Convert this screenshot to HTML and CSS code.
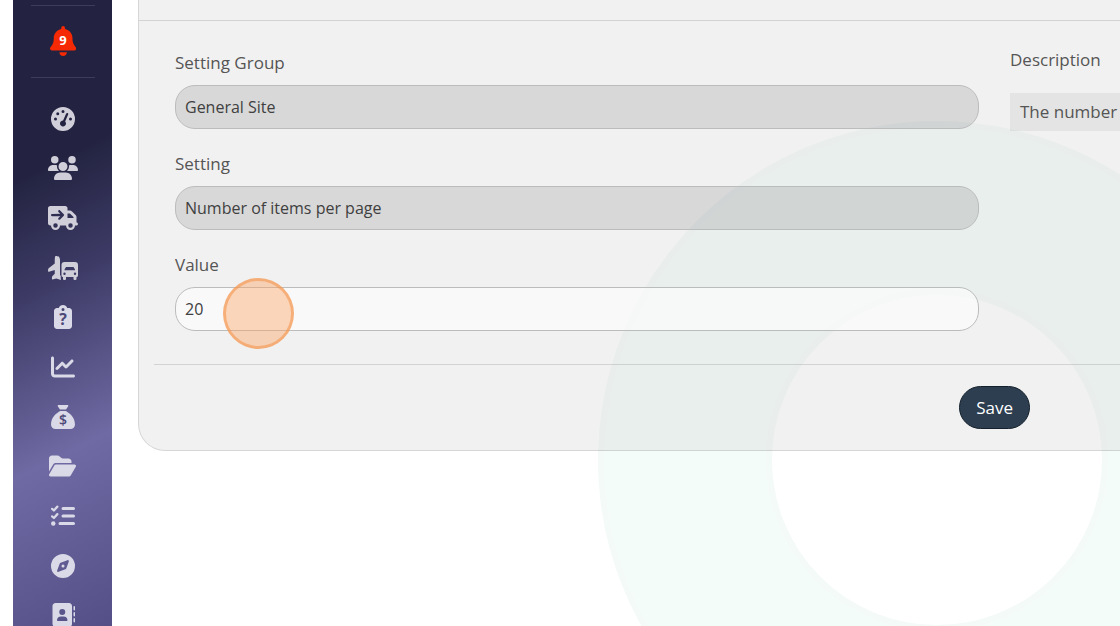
FILE: index.html
```html
<!DOCTYPE html>
<html lang="en">
<head>
<meta charset="utf-8">
<meta name="viewport" content="width=device-width, initial-scale=1">
<title>Edit Setting</title>
<link rel="stylesheet" href="styles.css">
</head>
<body>
<div class="page">
  <svg class="backdrop" viewBox="0 0 680 680" aria-hidden="true">
    <circle cx="340" cy="340" r="252" fill="none" stroke="#f4faf8" stroke-width="174"/>
    <circle cx="340" cy="340" r="252" fill="none" stroke="#f4fcfa" stroke-width="162"/>
  </svg>

  <nav class="sidebar" aria-label="Main">
    <div class="alerts">
      <a class="bell" href="#" aria-label="9 notifications">
        <svg class="bell-icon" viewBox="0 0 448 512" aria-hidden="true"><path d="M224 0c-17.7 0-32 14.3-32 32V51.2C119 66 64 130.6 64 208v18.8c0 47-17.3 92.4-48.5 127.6l-7.4 8.3c-8.4 9.4-10.4 22.9-5.3 34.4S19.4 416 32 416H416c12.6 0 24-7.4 29.2-18.9s3.1-25-5.3-34.4l-7.4-8.3C401.3 319.2 384 273.9 384 226.8V208c0-77.4-55-142-128-156.8V32c0-17.7-14.3-32-32-32zm45.3 493.3c12-12 18.7-28.3 18.7-45.3H224 160c0 17 6.7 33.3 18.7 45.3s28.3 18.7 45.3 18.7s33.3-6.7 45.3-18.7z"/></svg>
        <span class="count">9</span>
      </a>
    </div>
    <ul class="menu">
      <li><a href="#" aria-label="Dashboard"><svg class="icon" viewBox="0 0 512 512"><path d="M0 256a256 256 0 1 1 512 0A256 256 0 1 1 0 256zM288 96a32 32 0 1 0 -64 0 32 32 0 1 0 64 0zM256 416c35.3 0 64-28.7 64-64c0-17.4-6.9-33.1-18.1-44.6L366 161.7c5.3-12.1-.2-26.3-12.3-31.6s-26.3 .2-31.6 12.3L257.9 288c-.6 0-1.3 0-1.9 0c-35.3 0-64 28.7-64 64s28.7 64 64 64zM176 144a32 32 0 1 0 -64 0 32 32 0 1 0 64 0zM96 288a32 32 0 1 0 0-64 32 32 0 1 0 0 64zm352-32a32 32 0 1 0 -64 0 32 32 0 1 0 64 0z"/></svg></a></li>
      <li><a href="#" aria-label="Users"><svg class="icon" viewBox="0 0 640 512"><path d="M144 0a80 80 0 1 1 0 160A80 80 0 1 1 144 0zM512 0a80 80 0 1 1 0 160A80 80 0 1 1 512 0zM0 298.7C0 239.8 47.8 192 106.7 192h42.7c15.9 0 31 3.5 44.6 9.7c-1.3 7.2-1.9 14.7-1.9 22.3c0 38.2 16.8 72.5 43.3 96c-.2 0-.4 0-.7 0H21.3C9.6 320 0 310.4 0 298.7zM405.3 320c-.2 0-.4 0-.7 0c26.6-23.5 43.3-57.8 43.3-96c0-7.6-.7-15-1.9-22.3c13.6-6.3 28.7-9.7 44.6-9.7h42.7C592.2 192 640 239.8 640 298.7c0 11.8-9.6 21.3-21.3 21.3H405.3zM224 224a96 96 0 1 1 192 0 96 96 0 1 1 -192 0zM128 485.3C128 411.7 187.7 352 261.3 352H378.7C452.3 352 512 411.7 512 485.3c0 14.7-11.9 26.7-26.7 26.7H154.7c-14.7 0-26.7-11.9-26.7-26.7z"/></svg></a></li>
      <li><a href="#" aria-label="Deliveries"><svg class="icon" viewBox="0 0 640 512"><path d="M48 0C21.5 0 0 21.5 0 48V368c0 26.5 21.5 48 48 48H64c0 53 43 96 96 96s96-43 96-96H384c0 53 43 96 96 96s96-43 96-96h32c17.7 0 32-14.3 32-32s-14.3-32-32-32V288 256 237.3c0-17-6.7-33.3-18.7-45.3L512 114.7c-12-12-28.3-18.7-45.3-18.7H416V48c0-26.5-21.5-48-48-48H48zM416 160h50.7L544 237.3V256H416V160zM112 416a48 48 0 1 1 96 0 48 48 0 1 1 -96 0zm368-48a48 48 0 1 1 0 96 48 48 0 1 1 0-96zM257 95c-9.4-9.4-24.6-9.4-33.9 0s-9.4 24.6 0 33.9l39 39L88 168c-13.3 0-24 10.7-24 24s10.7 24 24 24l174.1 0-39 39c-9.4 9.4-9.4 24.6 0 33.9s24.6 9.4 33.9 0l80-80c9.4-9.4 9.4-24.6 0-33.9L257 95z"/></svg></a></li>
      <li><a href="#" aria-label="Travel"><svg class="icon" viewBox="0 0 640 512"><path d="M200 12C184 -12 168 -12 152 12Q144 40 144 80V158L20 254Q2 268 2 290V324Q4 338 20 334L144 298V380L96 424Q84 436 84 452V490Q86 502 98 500L176 480 250 500V512H272V430L256 400V190Q256 150 256 146V80Q256 40 228 12Q214 -2 200 12z"/><path d="M352 128H576Q640 128 640 192V416Q640 448 608 448V488Q608 512 584 512H568Q544 512 544 488V448H384V488Q384 512 360 512H344Q320 512 320 488V448Q288 448 288 416V192Q288 128 352 128zM384 232L352 288V304H576V288L544 232zM352 352a26 26 0 1 0 0 52 26 26 0 1 0 0-52zM576 352a26 26 0 1 0 0 52 26 26 0 1 0 0-52z"/></svg></a></li>
      <li><a href="#" aria-label="Requests"><svg class="icon" viewBox="0 0 384 512"><path d="M192 0c-41.8 0-77.4 26.7-90.5 64H64C28.7 64 0 92.7 0 128V448c0 35.3 28.7 64 64 64H320c35.3 0 64-28.7 64-64V128c0-35.3-28.7-64-64-64H282.5C269.4 26.7 233.8 0 192 0zm0 64a32 32 0 1 1 0 64 32 32 0 1 1 0-64z"/><text class="mark mark-query" x="192" y="430">?</text></svg></a></li>
      <li><a href="#" aria-label="Reports"><svg class="icon" viewBox="0 0 512 512"><path d="M64 64c0-17.7-14.3-32-32-32S0 46.3 0 64V400c0 44.2 35.8 80 80 80H480c17.7 0 32-14.3 32-32s-14.3-32-32-32H80c-8.8 0-16-7.2-16-16V64zm406.6 86.6c12.5-12.5 12.5-32.8 0-45.3s-32.8-12.5-45.3 0L320 210.7l-57.4-57.4c-12.5-12.5-32.8-12.5-45.3 0l-112 112c-12.5 12.5-12.5 32.8 0 45.3s32.8 12.5 45.3 0L240 221.3l57.4 57.4c12.5 12.5 32.8 12.5 45.3 0l128-128z"/></svg></a></li>
      <li><a href="#" aria-label="Finance"><svg class="icon" viewBox="0 0 512 512"><path d="M320 96H192L144.6 24.9C137.5 14.2 145.1 0 157.9 0H354.1c12.8 0 20.4 14.2 13.3 24.9L320 96zM192 128H320c3.8 2.5 8.1 5.3 13 8.4C389.7 172.7 512 250.9 512 416c0 53-43 96-96 96H96c-53 0-96-43-96-96C0 250.9 122.3 172.7 179 136.4c4.8-3.1 9.2-5.9 13-8.4z"/><text class="mark mark-dollar" x="256" y="420">$</text></svg></a></li>
      <li><a href="#" aria-label="Files"><svg class="icon" viewBox="0 0 576 512"><path d="M88.7 223.8L0 375.8V96C0 60.7 28.7 32 64 32H181.5c17 0 33.3 6.7 45.3 18.7l26.5 26.5c12 12 28.3 18.7 45.3 18.7H416c35.3 0 64 28.7 64 64v32H144c-22.8 0-43.8 12.1-55.3 31.8zm27.6 16.1C122.1 230 132.6 224 144 224H544c11.5 0 22 6.1 27.7 16.1s5.7 22.2-.1 32.1l-112 192C453.9 474 443.4 480 432 480H32c-11.5 0-22-6.1-27.7-16.1s-5.7-22.2 .1-32.1l112-192z"/></svg></a></li>
      <li><a href="#" aria-label="Tasks"><svg class="icon" viewBox="0 0 512 512"><path class="tick" d="M24 104l38 34 74-82M24 264l38 34 74-82"/><path class="row" d="M256 96H480M256 256H480M192 416H480"/><circle cx="48" cy="416" r="48"/></svg></a></li>
      <li><a href="#" aria-label="Explore"><svg class="icon" viewBox="0 0 512 512"><path d="M256 512A256 256 0 1 0 256 0a256 256 0 1 0 0 512zm50.7-186.9L162.4 380.6c-19.4 7.5-38.5-11.6-31-31l55.5-144.3c3.3-8.5 9.9-15.1 18.4-18.4l144.3-55.5c19.4-7.5 38.5 11.6 31 31L325.1 306.7c-3.2 8.5-9.9 15.1-18.4 18.4zM288 256a32 32 0 1 0 -64 0 32 32 0 1 0 64 0z"/></svg></a></li>
      <li><a href="#" aria-label="Contacts"><svg class="icon" viewBox="0 0 512 512"><path d="M96 0C60.7 0 32 28.7 32 64V448c0 35.3 28.7 64 64 64H384c35.3 0 64-28.7 64-64V64c0-35.3-28.7-64-64-64H96zM208 288h64c44.2 0 80 35.8 80 80c0 8.8-7.2 16-16 16H144c-8.8 0-16-7.2-16-16c0-44.2 35.8-80 80-80zm-32-96a64 64 0 1 1 128 0 64 64 0 1 1 -128 0zM512 80c0-8.8-7.2-16-16-16s-16 7.2-16 16v64c0 8.8 7.2 16 16 16s16-7.2 16-16V80zM496 192c-8.8 0-16 7.2-16 16v64c0 8.8 7.2 16 16 16s16-7.2 16-16V208c0-8.8-7.2-16-16-16zm16 144c0-8.8-7.2-16-16-16s-16 7.2-16 16v64c0 8.8 7.2 16 16 16s16-7.2 16-16V336z"/></svg></a></li>
    </ul>
  </nav>

  <main class="content">
    <form class="panel">
      <div class="panel-head"></div>
      <div class="panel-body">
        <div class="fields">
          <div class="field">
            <label for="group">Setting Group</label>
            <input id="group" type="text" value="General Site" disabled>
          </div>
          <div class="field">
            <label for="setting">Setting</label>
            <input id="setting" type="text" value="Number of items per page" disabled>
          </div>
          <div class="field">
            <label for="value">Value</label>
            <input id="value" type="text" value="20">
            <span class="pointer"></span>
          </div>
        </div>
        <section class="about">
          <h2>Description</h2>
          <p>The number</p>
        </section>
      </div>
      <div class="panel-foot">
        <button type="submit">Save</button>
      </div>
    </form>
  </main>
</div>
</body>
</html>
```
FILE: styles.css
```css
* {
  box-sizing: border-box;
}

body {
  margin: 0;
  background: #fff;
  color: #555;
  font-family: "Open Sans", "Noto Sans", sans-serif;
  font-size: 17px;
  line-height: 24px;
}

.page {
  position: relative;
  display: flex;
  height: 100vh;
  padding-left: 13px;
  overflow: hidden;
}

/* Decorative ring behind the panel */
.backdrop {
  position: absolute;
  top: 120px;
  right: -157px;
  width: 680px;
  height: 680px;
}

.sidebar {
  flex: none;
  width: 99px;
  overflow: hidden;
  background: linear-gradient(153deg, #232341 0%, #232341 27%, #3d3b66 45%, #6f6aa3 71%, #544f86 100%);
}

.alerts {
  display: flex;
  justify-content: center;
  align-items: center;
  height: 73px;
  margin: 5px 17px 0 18px;
  padding-bottom: 2px;
  border-top: 1px solid #3d3c5a;
  border-bottom: 1px solid #3d3c5a;
}

.bell {
  display: grid;
  place-items: center;
  color: #fff;
  text-decoration: none;
}

.bell-icon,
.count {
  grid-area: 1 / 1;
}

.bell-icon {
  height: 30px;
  fill: #f52a05;
}

.count {
  padding-bottom: 2px;
  font-size: 13px;
  font-weight: 700;
  line-height: 22px;
}

.menu {
  display: grid;
  grid-auto-rows: 1fr;
  height: 546px;
  margin: 16px 0 0;
  padding: 0;
  list-style: none;
}

.menu a {
  display: flex;
  justify-content: center;
  align-items: center;
  height: 100%;
}

.icon {
  height: 24px;
  fill: #dad9e7;
  fill-rule: evenodd;
}

.menu li:nth-child(-n+4) .icon {
  fill: #cfced9;
}

.mark {
  fill: #4c4877;
  text-anchor: middle;
}

.mark-query {
  font-size: 340px;
  font-weight: 700;
}

.mark-dollar {
  font-size: 300px;
  font-weight: 600;
}

.tick,
.row {
  fill: none;
  stroke: #dad9e7;
  stroke-linecap: round;
  stroke-linejoin: round;
}

.tick {
  stroke-width: 48px;
}

.row {
  stroke-width: 64px;
}

.content {
  position: relative;
  flex: 1;
  min-width: 0;
  padding-left: 26px;
}

.panel {
  border: solid rgba(0, 0, 0, 0.16);
  border-width: 0 0 1px 1px;
  border-bottom-left-radius: 27px;
  background: rgba(206, 206, 206, 0.28);
  background-clip: padding-box;
}

.panel-head {
  height: 21px;
  border-bottom: 1px solid rgba(0, 0, 0, 0.12);
}

.panel-body {
  display: grid;
  grid-template-columns: minmax(0, 1fr) 110px;
  gap: 31px;
  margin-left: 15px;
  padding: 30px 0 33px 21px;
  border-bottom: 1px solid rgba(0, 0, 0, 0.12);
}

.fields {
  display: grid;
  gap: 23px;
}

.field {
  position: relative;
  display: grid;
  gap: 10px;
}

.field input {
  width: 100%;
  height: 44px;
  padding: 0 9px;
  border: 1px solid #bbbdbc;
  border-radius: 20px;
  outline: none;
  background: rgba(255, 255, 255, 0.6);
  color: #404040;
  font: inherit;
  font-size: 16px;
}

.field input:disabled {
  background: rgba(0, 0, 0, 0.1);
}

/* Click marker over the value box */
.pointer {
  position: absolute;
  top: 25px;
  left: 48px;
  width: 71px;
  height: 71px;
  border: 3px solid rgba(243, 150, 80, 0.6);
  border-radius: 50%;
  background: rgba(255, 160, 90, 0.4);
}

.about h2 {
  margin: 0 0 24px;
  font-size: 17px;
  font-weight: 400;
  line-height: 18px;
}

.about p {
  margin: 0;
  padding: 7px 0 7px 10px;
  overflow: hidden;
  background: rgba(0, 0, 0, 0.05);
  white-space: nowrap;
}

.panel-foot {
  display: flex;
  justify-content: flex-end;
  padding: 21px 90px;
}

.panel-foot button {
  height: 43px;
  padding: 0 16px;
  border: 1px solid #14202b;
  border-radius: 22px;
  background: #2c3e50;
  color: #fff;
  font: inherit;
}
```
